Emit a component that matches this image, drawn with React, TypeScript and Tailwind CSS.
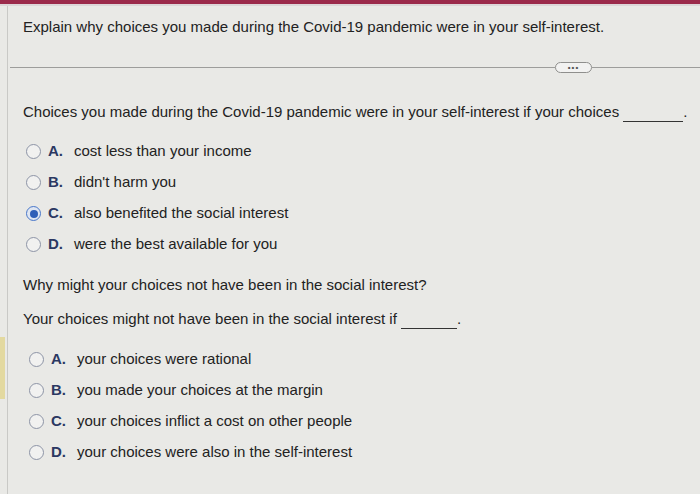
import React from 'react';

type Opt = { key: string; text: string; checked?: boolean };

const first: Opt[] = [
  { key: 'A.', text: 'cost less than your income' },
  { key: 'B.', text: "didn't harm you" },
  { key: 'C.', text: 'also benefited the social interest', checked: true },
  { key: 'D.', text: 'were the best available for you' },
];

const second: Opt[] = [
  { key: 'A.', text: 'your choices were rational' },
  { key: 'B.', text: 'you made your choices at the margin' },
  { key: 'C.', text: 'your choices inflict a cost on other people' },
  { key: 'D.', text: 'your choices were also in the self-interest' },
];

function Radio({ checked }: { checked?: boolean }) {
  if (checked) {
    return (
      <span className="flex h-[15px] w-[15px] items-center justify-center rounded-full border-[1.5px] border-[#4a78c9] bg-[#dfe6f2]">
        <span className="h-[8px] w-[8px] rounded-full bg-[#2f5fb8]" />
      </span>
    );
  }
  return <span className="h-[15px] w-[15px] rounded-full border-[1.5px] border-[#8d94a6] bg-[#f1f1f0]" />;
}

function Options({ items, indent }: { items: Opt[]; indent: string }) {
  return (
    <ul className={`flex flex-col gap-[12px] ${indent}`}>
      {items.map((o) => (
        <li key={o.key} className="flex h-[19px] items-center">
          <Radio checked={o.checked} />
          <span className="ml-[7px] w-[26px] font-bold text-[#2b3862]">{o.key}</span>
          <span>{o.text}</span>
        </li>
      ))}
    </ul>
  );
}

export default function App() {
  return (
    <div className="relative h-[494px] w-[700px] overflow-hidden bg-[#e9e9e6] text-[15px] text-[#222] [font-family:'Liberation_Sans',Arial,sans-serif]">
      <div className="h-[4px] bg-[#9b2a4b]" />
      <div className="h-[2px] bg-[#dcd6d8]" />
      {/* yellow marker at left edge */}
      <div className="absolute left-0 top-[337px] h-[62px] w-[5px] bg-[#e3d9a0]" />
      <div className="ml-[7px] h-[488px] border-l border-[#c9c9c6]">
        <p className="pl-[15px] pt-[11px] leading-[19px]">
          Explain why choices you made during the Covid-19 pandemic were in your self-interest.
        </p>

        <div className="mt-[26px] flex items-center pl-[2px]">
          <div className="h-px flex-1 bg-[#9d9d9b]" />
          <div className="flex h-[11px] w-[37px] items-center justify-center rounded-full border border-[#8f8f8d] bg-[#f2f2f1] text-[8px] font-bold leading-none tracking-[1px] text-[#555]">
            •••
          </div>
          <div className="h-px w-[108px] bg-[#9d9d9b]" />
        </div>

        <p className="mt-[29px] pl-[15px] leading-[19px]">
          Choices you made during the Covid-19 pandemic were in your self-interest if your choices{' '}
          <span className="inline-block w-[60px] border-b border-[#333] align-baseline">&nbsp;</span>.
        </p>

        <div className="mt-[20px]">
          <Options items={first} indent="pl-[18px]" />
        </div>

        <p className="mt-[21px] pl-[15px] leading-[19px]">Why might your choices not have been in the social interest?</p>
        <p className="mt-[15px] pl-[15px] leading-[19px]">
          Your choices might not have been in the social interest if{' '}
          <span className="inline-block w-[56px] border-b border-[#333] align-baseline">&nbsp;</span>.
        </p>

        <div className="mt-[21px]">
          <Options items={second} indent="pl-[21px]" />
        </div>
      </div>
    </div>
  );
}
